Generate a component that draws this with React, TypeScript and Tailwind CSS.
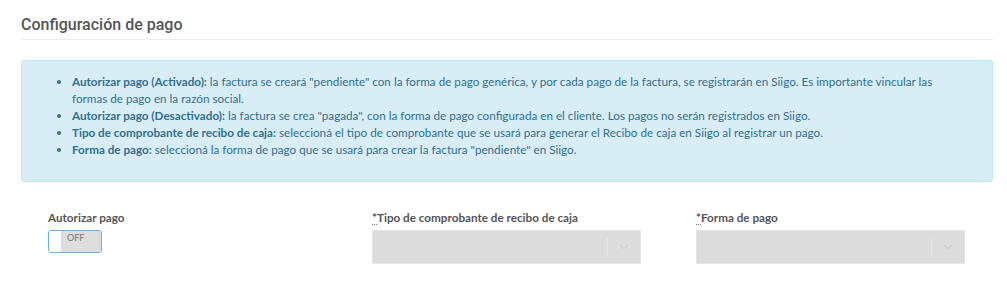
import { ChevronDown } from "lucide-react";

const bodyFont = { fontFamily: "Lato, 'Open Sans', sans-serif" };

function Req({ children }: { children: string }) {
  return (
    <span>
      <abbr className="no-underline border-b border-dotted border-[#777]">*</abbr>
      {children}
    </span>
  );
}

function DisabledSelect() {
  return (
    <div className="flex h-[34px] w-[269px] items-center border border-[#e4e4e4] bg-[#dcdcdc]">
      <div className="flex-1" />
      <div className="h-[18px] w-px bg-[#e6e6e6]" />
      <div className="flex w-[32px] justify-center text-[#c6c6c6]">
        <ChevronDown size={14} strokeWidth={1.5} />
      </div>
    </div>
  );
}

export default function App() {
  return (
    <div className="h-[287px] w-[1007px] bg-white pl-[21px] pr-[14px] pt-[18px]" style={bodyFont}>
      <h3
        className="border-b border-[#eeeeee] pb-[7px] text-[16px] font-medium leading-[14px] text-[#555]"
        style={{ fontFamily: "Roboto, 'Liberation Sans', sans-serif" }}
      >
        Configuración de pago
      </h3>

      <div className="mt-[20px] h-[122px] rounded-[3px] border border-[#bce8f1] bg-[#d9edf7] pl-[38px] pr-[40px] pt-[12px] text-[11.7px] leading-[17px] text-[#31708f]">
        <ul className="list-disc pl-[12px]">
          <li>
            <b>Autorizar pago (Activado):</b> la factura se creará "pendiente" con la forma de pago genérica, y por cada
            pago de la factura, se registrarán en Siigo. Es importante vincular las formas de pago en la razón social.
          </li>
          <li>
            <b>Autorizar pago (Desactivado):</b> la factura se crea "pagada", con la forma de pago configurada en el
            cliente. Los pagos no serán registrados en Siigo.
          </li>
          <li>
            <b>Tipo de comprobante de recibo de caja:</b> seleccioná el tipo de comprobante que se usará para generar el
            Recibo de caja en Siigo al registrar un pago.
          </li>
          <li>
            <b>Forma de pago:</b> seleccioná la forma de pago que se usará para crear la factura "pendiente" en Siigo.
          </li>
        </ul>
      </div>

      <div className="mt-[28px] grid grid-cols-3 text-[11.7px] font-bold leading-[14px] text-[#555]">
        <div className="px-[27px]">
          <div>Autorizar pago</div>
          <div className="mt-[6px] flex h-[23px] w-[54px] overflow-hidden rounded-[3px] border-[1.5px] border-[#6aaee6]">
            <div className="w-[12px] bg-white" />
            <div className="flex-1 bg-[#dddddd] pl-[6px] pt-[1px] text-[9px] font-normal leading-[12px] text-[#777]">
              OFF
            </div>
          </div>
        </div>
        <div className="px-[27px]">
          <div>
            <Req>Tipo de comprobante de recibo de caja</Req>
          </div>
          <div className="mt-[6px]">
            <DisabledSelect />
          </div>
        </div>
        <div className="px-[27px]">
          <div>
            <Req>Forma de pago</Req>
          </div>
          <div className="mt-[6px]">
            <DisabledSelect />
          </div>
        </div>
      </div>
    </div>
  );
}
